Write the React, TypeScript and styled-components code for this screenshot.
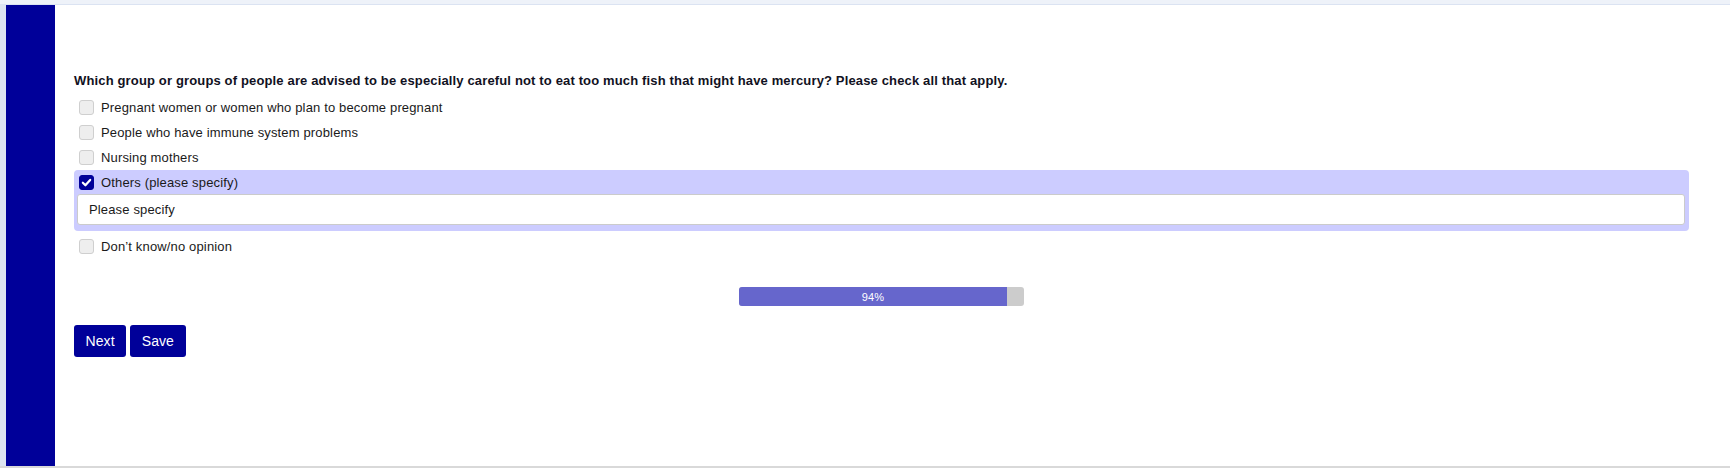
import React from 'react';
import styled, { createGlobalStyle } from 'styled-components';

const GlobalStyle = createGlobalStyle`
  html, body {
    margin: 0;
    padding: 0;
    background: #fff;
    font-family: "Liberation Sans", Arial, sans-serif;
  }
`;

const options = [
  { label: 'Pregnant women or women who plan to become pregnant', checked: false },
  { label: 'People who have immune system problems', checked: false },
  { label: 'Nursing mothers', checked: false },
  { label: 'Others (please specify)', checked: true, other: true },
  { label: 'Don\u2019t know/no opinion', checked: false },
];

const progress = 94;

const Page = styled.div`
  height: 468px;
  display: flex;
  flex-direction: column;
  box-sizing: border-box;
  border-bottom: 2px solid #d9d9d9;
`;

const TopBar = styled.div`
  height: 4px;
  background: #eef2f9;
  border-bottom: 1px solid #dbe3f2;
`;

const Main = styled.div`
  flex: 1;
  display: flex;
`;

const Gutter = styled.div`
  width: 6px;
  background: #dde4f1;
`;

const Sidebar = styled.div`
  width: 49px;
  background: #000099;
`;

const Content = styled.div`
  flex: 1;
  background: #fff;
  padding: 68px 41px 0 19px;
`;

const Question = styled.div`
  font-size: 13px;
  line-height: 15px;
  font-weight: bold;
  letter-spacing: 0.15px;
  color: #111122;
  margin-bottom: 7px;
`;

const List = styled.div`
  display: flex;
  flex-direction: column;
`;

const Item = styled.div<{ $active?: boolean }>`
  background: ${p => (p.$active ? '#ccccff' : 'transparent')};
  border-radius: 4px;
  padding: ${p => (p.$active ? '0 4px 6px 3px' : '0')};
  margin-bottom: ${p => (p.$active ? '3px' : '0')};
`;

const Row = styled.label<{ $tight?: boolean }>`
  display: flex;
  align-items: center;
  height: ${p => (p.$tight ? '24px' : '25px')};
  padding-left: ${p => (p.$tight ? '2px' : '5px')};
  font-size: 13px;
  letter-spacing: 0.15px;
  color: #1a1a1a;
  gap: 7px;
`;

const Box = styled.span<{ $checked?: boolean }>`
  width: 13px;
  height: 13px;
  border-radius: 3px;
  border: 1px solid ${p => (p.$checked ? '#000099' : '#cfcfcf')};
  background: ${p => (p.$checked ? '#000099' : '#eeeeee')};
  display: flex;
  align-items: center;
  justify-content: center;
`;

const SpecifyInput = styled.input`
  display: block;
  width: 100%;
  box-sizing: border-box;
  height: 31px;
  border: 1px solid #cbcbcb;
  border-radius: 3px;
  background: #fff;
  padding: 0 11px;
  font-family: "Liberation Sans", Arial, sans-serif;
  font-size: 13px;
  letter-spacing: 0.15px;
  color: #1a1a1a;
  &::placeholder {
    color: #1a1a1a;
    opacity: 1;
  }
`;

const ProgressWrap = styled.div`
  display: flex;
  justify-content: center;
  margin-top: 28px;
`;

const Track = styled.div`
  width: 285px;
  height: 19px;
  background: #cccccc;
  border-radius: 3px;
  overflow: hidden;
  display: flex;
`;

const Fill = styled.div`
  height: 100%;
  background: #6666cc;
  color: #fff;
  font-size: 11px;
  letter-spacing: 0.2px;
  display: flex;
  align-items: center;
  justify-content: center;
`;

const Buttons = styled.div`
  display: flex;
  gap: 4px;
  margin-top: 19px;
`;

const Button = styled.button`
  height: 32px;
  padding: 0 11.5px;
  background: #000099;
  color: #fff;
  border: none;
  border-radius: 3px;
  font-family: "Liberation Sans", Arial, sans-serif;
  font-size: 14px;
  letter-spacing: 0.1px;
  cursor: pointer;
`;

const Check = () => (
  <svg width="11" height="11" viewBox="0 0 12 12">
    <path d="M2 6.2 L4.8 9 L10 3.2" fill="none" stroke="#fff" strokeWidth="2.4" strokeLinecap="round" strokeLinejoin="round" />
  </svg>
);

const App: React.FC = () => {
  return (
    <>
      <GlobalStyle />
      <Page>
        <TopBar />
        <Main>
          <Gutter />
          <Sidebar />
          <Content>
            <Question>
              Which group or groups of people are advised to be especially careful not to eat too much fish that might have mercury? Please check all that apply.
            </Question>
            <List>
              {options.map(opt => (
                <Item key={opt.label} $active={opt.other}>
                  <Row $tight={opt.other}>
                    <Box $checked={opt.checked}>{opt.checked && <Check />}</Box>
                    {opt.label}
                  </Row>
                  {opt.other && <SpecifyInput placeholder="Please specify" />}
                </Item>
              ))}
            </List>
            <ProgressWrap>
              <Track>
                <Fill style={{ width: `${progress}%` }}>{progress}%</Fill>
              </Track>
            </ProgressWrap>
            <Buttons>
              <Button>Next</Button>
              <Button>Save</Button>
            </Buttons>
          </Content>
        </Main>
      </Page>
    </>
  );
};

export default App;
